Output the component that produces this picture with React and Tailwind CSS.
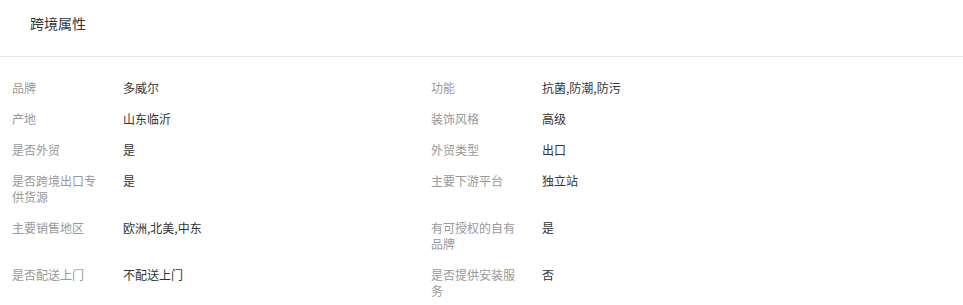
import React from 'react';

const attrs = [
  [
    { label: '品牌', value: '多威尔' },
    { label: '功能', value: '抗菌,防潮,防污' },
  ],
  [
    { label: '产地', value: '山东临沂' },
    { label: '装饰风格', value: '高级' },
  ],
  [
    { label: '是否外贸', value: '是' },
    { label: '外贸类型', value: '出口' },
  ],
  [
    { label: '是否跨境出口专供货源', value: '是' },
    { label: '主要下游平台', value: '独立站' },
  ],
  [
    { label: '主要销售地区', value: '欧洲,北美,中东' },
    { label: '有可授权的自有品牌', value: '是' },
  ],
  [
    { label: '是否配送上门', value: '不配送上门' },
    { label: '是否提供安装服务', value: '否' },
  ],
];

function Attr({ label, value, wide }) {
  return (
    <div className={`flex ${wide ? 'w-[419px]' : 'flex-1'}`}>
      <div className="w-[90px] shrink-0 text-[#999]">{label}</div>
      <div className="ml-[21px] text-[#333]">{value}</div>
    </div>
  );
}

export default function App() {
  return (
    <div className="w-[963px] h-[305px] bg-white overflow-hidden" style={{ fontFamily: '"Noto Sans CJK SC", "Microsoft YaHei", sans-serif' }}>
      {/* Header */}
      <div className="h-[57px] border-b border-[#e6e6e6] flex items-center pl-[30px]">
        <h2 className="text-[14px] text-[#333] leading-5 -mt-[10px]">跨境属性</h2>
      </div>

      {/* Attribute rows */}
      <div className="pl-[12px] pt-[15px] text-[12px] leading-4">
        {attrs.map((row, i) => (
          <div key={i} className="flex pt-[8px] pb-[7px]">
            <Attr {...row[0]} wide />
            <Attr {...row[1]} />
          </div>
        ))}
      </div>
    </div>
  );
}
